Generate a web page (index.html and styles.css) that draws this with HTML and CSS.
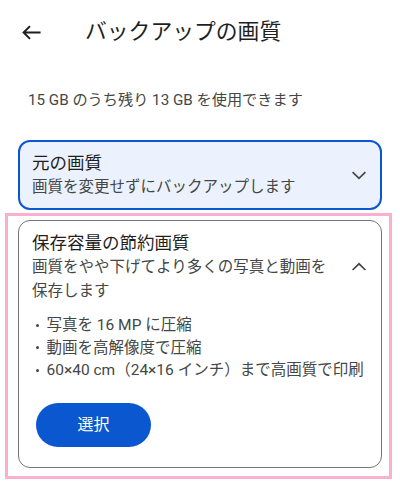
FILE: index.html
```html
<!DOCTYPE html>
<html lang="ja">
<head>
<meta charset="utf-8">
<title>バックアップの画質</title>
<link rel="stylesheet" href="styles.css">
</head>
<body>
<div class="page">
  <header class="topbar">
    <svg class="back" width="20" height="20" viewBox="0 0 20 20" aria-hidden="true">
      <path d="M1.6 10.5 H18.6 M8 4.1 L1.6 10.5 L8 16.9" fill="none" stroke="#1f1f1f" stroke-width="2" stroke-linecap="butt" stroke-linejoin="miter"/>
    </svg>
    <h1 class="title">バックアップの画質</h1>
  </header>

  <p class="storage">15 GB のうち残り 13 GB を使用できます</p>

  <div class="options">
    <div class="card card-selected">
      <div class="card-head">
        <div class="card-text">
          <div class="card-title">元の画質</div>
          <div class="card-sub">画質を変更せずにバックアップします</div>
        </div>
        <svg class="chev" width="24" height="24" viewBox="0 0 24 24" aria-hidden="true">
          <polyline points="5.6,9.2 12,15.4 18.4,9.2" fill="none" stroke="#444746" stroke-width="1.7"/>
        </svg>
      </div>
    </div>

    <div class="card card-open">
      <div class="card-head">
        <div class="card-text">
          <div class="card-title">保存容量の節約画質</div>
          <div class="card-sub">画質をやや下げてより多くの写真と動画を保存します</div>
        </div>
        <svg class="chev" width="24" height="24" viewBox="0 0 24 24" aria-hidden="true">
          <polyline points="5.6,15 12,8.8 18.4,15" fill="none" stroke="#444746" stroke-width="1.7"/>
        </svg>
      </div>
      <ul class="features">
        <li>写真を 16 MP に圧縮</li>
        <li>動画を高解像度で圧縮</li>
        <li>60×40 cm（24×16 インチ）まで高画質で印刷</li>
      </ul>
      <button class="select-btn" type="button">選択</button>
    </div>

    <div class="highlight" aria-hidden="true"></div>
  </div>
</div>
</body>
</html>
```

FILE: styles.css
```css
* {
  box-sizing: border-box;
}

html, body {
  margin: 0;
  padding: 0;
  background: #ffffff;
}

body {
  font-family: Roboto, "Noto Sans CJK JP", sans-serif;
  color: #1f1f1f;
  width: 400px;
  height: 493px;
  overflow: hidden;
}

.page {
  position: relative;
}

.topbar {
  height: 64px;
  display: flex;
  align-items: center;
  padding-left: 22px;
  gap: 43px;
}

.back {
  display: block;
  flex: none;
}

.title {
  margin: 0;
  font-size: 21.8px;
  font-weight: 400;
  line-height: 28px;
  color: #1f1f1f;
}

.storage {
  margin: 26px 0 0;
  padding-left: 28px;
  font-size: 15.2px;
  line-height: 20px;
  color: #444746;
}

.options {
  position: relative;
  margin-top: 30px;
  padding: 0 18px;
  display: flex;
  flex-direction: column;
  gap: 10px;
}

.card {
  border-radius: 12px;
  background: #ffffff;
}

.card-selected {
  border: 2px solid #0b57d0;
  background: #ecf2fd;
  padding: 9px 9.5px 9px 12px;
}

.card-open {
  border: 1px solid #747775;
  padding: 10px 10.5px 20px 13px;
}

.card-head {
  display: flex;
  align-items: center;
}

.card-text {
  flex: 1;
  min-width: 0;
}

.chev {
  display: block;
  flex: none;
  margin-left: 10px;
}

.card-title {
  font-size: 17.5px;
  line-height: 24px;
  color: #1f1f1f;
}

.card-sub {
  font-size: 15.5px;
  line-height: 24px;
  color: #444746;
}

.features {
  list-style: none;
  margin: 11px 0 0;
  padding: 0 0 0 4px;
}

.features li {
  display: flex;
  align-items: center;
  gap: 7.5px;
  font-size: 15.5px;
  line-height: 22.5px;
  color: #444746;
  white-space: nowrap;
}

.features li::before {
  content: "";
  flex: none;
  width: 3px;
  height: 3px;
  border-radius: 50%;
  background: #444746;
}

.select-btn {
  display: block;
  margin: 21px 0 0 4px;
  width: 115px;
  height: 44px;
  border: none;
  border-radius: 22px;
  background: #0b57d0;
  color: #ffffff;
  font-family: Roboto, "Noto Sans CJK JP", sans-serif;
  font-size: 16px;
  line-height: 20px;
  padding: 0;
}

.highlight {
  position: absolute;
  left: 5px;
  top: 73px;
  width: 387px;
  height: 266px;
  border: 3px solid #f8b0cc;
  pointer-events: none;
}
```
